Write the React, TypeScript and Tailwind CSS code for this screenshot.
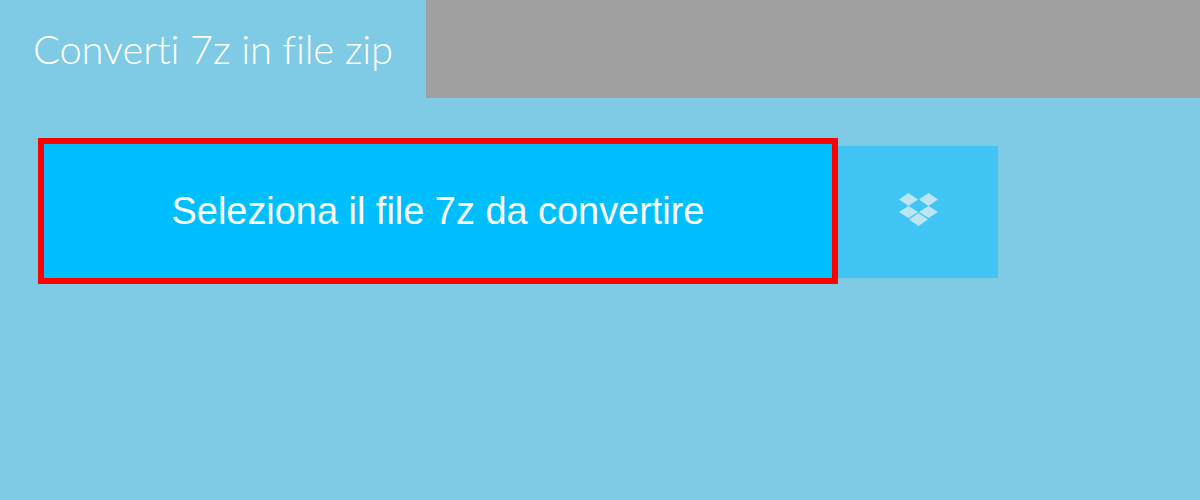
export default function App() {
  return (
    <div className="w-[1200px] h-[500px] bg-[#7fcbe5] overflow-hidden font-['Lato',sans-serif]">
      <div className="flex h-[98px]">
        <div className="w-[426px] flex items-center pl-[33px] text-[40px] font-light text-white [font-variant-ligatures:none] tracking-[-0.18px]">
          Converti 7z in file zip
        </div>
        <div className="flex-1 bg-[#a0a0a0]" />
      </div>
      <div className="flex items-start pl-[38px] pt-[40px]">
        <button className="w-[800px] h-[146px] bg-[#00bfff] border-[6px] border-[#ff0000] text-[37.9px] text-white font-['Liberation_Sans',sans-serif]">
          Seleziona il file 7z da convertire
        </button>
        <div className="w-[160px] h-[132px] mt-[8px] bg-[#40c5f5] flex items-center justify-center">
          <svg viewBox="0 0 40 34" className="w-[40px] h-[34px] mb-[4px]" fill="#bde6f5">
            <path d="M10.5 0 20 6.5 10.5 13 1 6.5Z" />
            <path d="M30.5 0 40 6.5 30.5 13 21 6.5Z" />
            <path d="M10.5 13 20 19 10.5 25 1 19Z" />
            <path d="M30.5 13 40 19 30.5 25 21 19Z" />
            <path d="M20.5 20 30 26.5 20.5 33 11 26.5Z" />
          </svg>
        </div>
      </div>
    </div>
  )
}
